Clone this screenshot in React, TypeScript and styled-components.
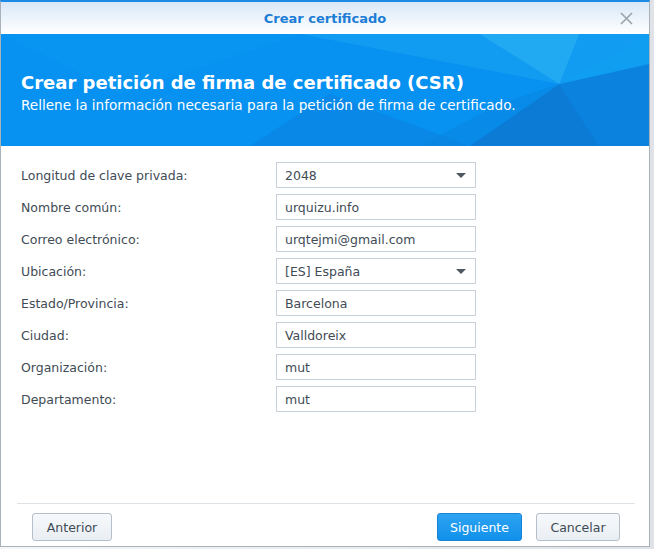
import React from 'react';
import styled, { createGlobalStyle } from 'styled-components';

const GlobalStyle = createGlobalStyle`
  html, body {
    margin: 0;
    padding: 0;
    background: #e9ecef;
  }
  body {
    font-family: "DejaVu Sans", Verdana, sans-serif;
  }
`;

const Page = styled.div`
  width: 654px;
  height: 549px;
  display: flex;
  background: linear-gradient(to right, #f4f6f8, #dfe3e7);
`;

const Dialog = styled.div`
  width: 650px;
  height: 547px;
  display: flex;
  flex-direction: column;
  background: #fff;
  border: 1px solid #a9b1b9;
  border-top: 2px solid #1b8be6;
  box-sizing: border-box;
`;

const TitleBar = styled.div`
  height: 32px;
  flex: none;
  display: flex;
  align-items: center;
  justify-content: center;
  position: relative;
  background: linear-gradient(to bottom, #d9e8f7, #ffffff);
  color: #1c7dd6;
  font-size: 13px;
  font-weight: bold;
`;

const CloseButton = styled.div`
  position: absolute;
  right: 16px;
  top: 9px;
  width: 14px;
  height: 14px;
  display: flex;
  align-items: center;
  justify-content: center;
`;

const Banner = styled.div`
  height: 112px;
  flex: none;
  position: relative;
  overflow: hidden;
  background: #0791f0;
  color: #fff;
  display: flex;
  flex-direction: column;
  justify-content: center;
  padding: 4px 20px 0;
  box-sizing: border-box;
`;

const Facets = styled.svg`
  position: absolute;
  inset: 0;
  width: 100%;
  height: 100%;
`;

const BannerTitle = styled.h1`
  position: relative;
  margin: 0 0 2px;
  font-size: 18px;
  font-weight: bold;
  line-height: 24px;
`;

const BannerSub = styled.div`
  position: relative;
  font-size: 13.6px;
  line-height: 17px;
`;

const Form = styled.div`
  display: flex;
  flex-direction: column;
  gap: 6px;
  padding: 16px 20px 0;
`;

const Row = styled.div`
  display: flex;
  align-items: center;
  height: 26px;
`;

const Label = styled.label`
  width: 255px;
  font-size: 12.5px;
  color: #414b55;
`;

const Field = styled.div`
  width: 200px;
  height: 26px;
  box-sizing: border-box;
  border: 1px solid #c6d0da;
  display: flex;
  align-items: center;
  justify-content: space-between;
  padding: 0 9px 0 8px;
  font-size: 12.5px;
  color: #414b55;
`;

const Caret = styled.span`
  width: 0;
  height: 0;
  border-left: 5px solid transparent;
  border-right: 5px solid transparent;
  border-top: 5px solid #4e5863;
`;

const Footer = styled.div`
  margin: auto 14px 0 16px;
  border-top: 1px solid #dde2e7;
  display: flex;
  align-items: center;
  gap: 14px;
  padding: 9px 15px 5px;
`;

const Spacer = styled.div`
  flex: 1;
`;

const Button = styled.button<{ $w: number; $primary?: boolean }>`
  height: 28px;
  padding: 0;
  width: ${(p) => p.$w}px;
  border-radius: 3px;
  font-family: "DejaVu Sans", Verdana, sans-serif;
  font-size: 12.5px;
  cursor: pointer;
  border: 1px solid ${(p) => (p.$primary ? '#1683d6' : '#b6c0ca')};
  background: ${(p) =>
    p.$primary
      ? 'linear-gradient(to bottom, #2da3f2, #1190ea)'
      : 'linear-gradient(to bottom, #f7f9fb, #e9eef3)'};
  color: ${(p) => (p.$primary ? '#ffffff' : '#414b55')};
`;

const fields: { label: string; value: string; select?: boolean }[] = [
  { label: 'Longitud de clave privada:', value: '2048', select: true },
  { label: 'Nombre común:', value: 'urquizu.info' },
  { label: 'Correo electrónico:', value: 'urqtejmi@gmail.com' },
  { label: 'Ubicación:', value: '[ES] España', select: true },
  { label: 'Estado/Provincia:', value: 'Barcelona' },
  { label: 'Ciudad:', value: 'Valldoreix' },
  { label: 'Organización:', value: 'mut' },
  { label: 'Departamento:', value: 'mut' },
];

export default function App() {
  return (
    <Page>
      <GlobalStyle />
      <Dialog>
        <TitleBar>
          Crear certificado
          <CloseButton>
            <svg width="13" height="13" viewBox="0 0 13 13">
              <path d="M1 1 L12 12 M12 1 L1 12" stroke="#9aa2aa" strokeWidth="1.6" />
            </svg>
          </CloseButton>
        </TitleBar>
        <Banner>
          <Facets viewBox="0 0 650 112" preserveAspectRatio="none">
            <polygon points="300,0 650,0 650,40 560,50" fill="#1aa4f2" opacity="0.55" />
            <polygon points="480,0 580,0 560,50" fill="#2db3f3" opacity="0.6" />
            <polygon points="560,50 650,30 650,112 600,112" fill="#0a82de" />
            <polygon points="560,50 600,112 470,112" fill="#0b7bd6" />
            <polygon points="560,50 470,112 420,112 500,70" fill="#078ae8" />
            <polygon points="330,60 470,112 250,112" fill="#0a85e3" opacity="0.7" />
            <polygon points="560,50 650,30 650,0" fill="#11a0f2" opacity="0.6" />
            <polygon points="0,0 300,0 120,60" fill="#0a97f2" opacity="0.5" />
          </Facets>
          <BannerTitle>Crear petición de firma de certificado (CSR)</BannerTitle>
          <BannerSub>Rellene la información necesaria para la petición de firma de certificado.</BannerSub>
        </Banner>
        <Form>
          {fields.map((f) => (
            <Row key={f.label}>
              <Label>{f.label}</Label>
              <Field>
                {f.value}
                {f.select && <Caret />}
              </Field>
            </Row>
          ))}
        </Form>
        <Footer>
          <Button $w={80}>Anterior</Button>
          <Spacer />
          <Button $w={85} $primary>Siguiente</Button>
          <Button $w={84}>Cancelar</Button>
        </Footer>
      </Dialog>
    </Page>
  );
}
